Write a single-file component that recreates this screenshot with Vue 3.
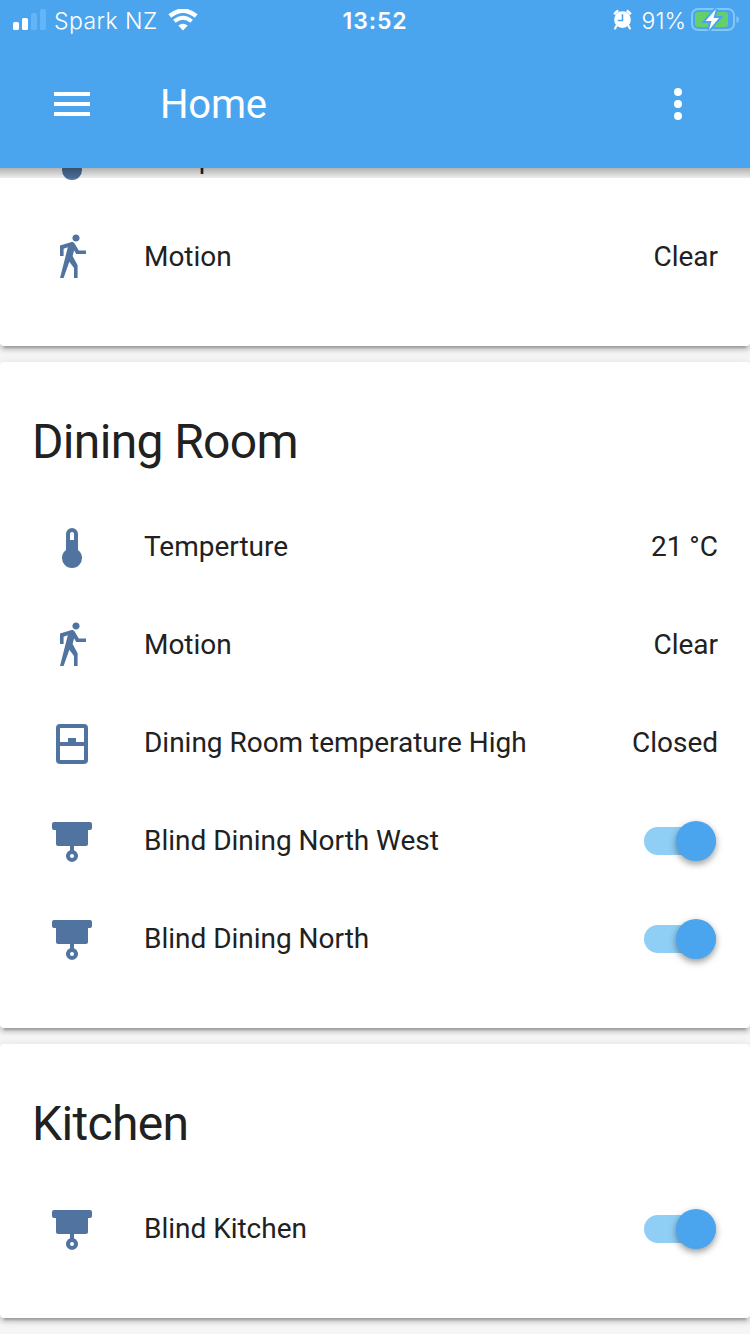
<script setup>
const icons = {
  thermometer: 'M15 13V5A3 3 0 0 0 9 5V13A5 5 0 1 0 15 13M12 4A1 1 0 0 1 13 5V8H11V5A1 1 0 0 1 12 4Z',
  walk: 'M14.12,10H19V8.2H15.38L13.38,4.87C13.08,4.37 12.54,4.03 11.92,4.03C11.74,4.03 11.58,4.06 11.42,4.11L6,5.8V11H7.8V7.33L9.91,6.67L6,22H7.8L10.67,13.89L13,17V22H14.8V15.59L12.31,11.05L13.04,8.18M14,3.8C15,3.8 15.8,3 15.8,2C15.8,1 15,0.2 14,0.2C13,0.2 12.2,1 12.2,2C12.2,3 13,3.8 14,3.8Z',
  window: 'M6,11H10V9H14V11H18V4H6V11M18,13H6V20H18V13M6,2H18A2,2 0 0,1 20,4V20A2,2 0 0,1 18,22H6A2,2 0 0,1 4,20V4A2,2 0 0,1 6,2Z',
  blind: 'M3 2H21A1 1 0 0 1 22 3V5A1 1 0 0 1 21 6H20V13A1 1 0 0 1 19 14H13V16.17A3 3 0 1 1 11 16.17V14H5A1 1 0 0 1 4 13V6H3A1 1 0 0 1 2 5V3A1 1 0 0 1 3 2M12 18A1 1 0 1 0 12 20A1 1 0 1 0 12 18Z'
}

const cards = [
  {
    rows: [
      { icon: 'thermometer', name: 'Temperature', value: '20 °C' },
      { icon: 'walk', name: 'Motion', value: 'Clear' }
    ]
  },
  {
    title: 'Dining Room',
    rows: [
      { icon: 'thermometer', name: 'Temperture', value: '21 °C' },
      { icon: 'walk', name: 'Motion', value: 'Clear' },
      { icon: 'window', name: 'Dining Room temperature High', value: 'Closed' },
      { icon: 'blind', name: 'Blind Dining North West' },
      { icon: 'blind', name: 'Blind Dining North' }
    ]
  },
  { title: 'Kitchen', rows: [{ icon: 'blind', name: 'Blind Kitchen' }] }
]
</script>

<template>
  <div class="screen">
    <header class="top">
      <div class="status">
        <div class="carrier">
          <svg class="signal" width="34" height="22" viewBox="0 0 34 22">
            <rect x="0" y="13" width="6" height="8" rx="1.6" fill="#fff" />
            <rect x="9" y="9" width="6" height="12" rx="1.6" fill="#fff" />
            <rect x="18" y="4" width="6" height="17" rx="1.6" fill="#62b5f7" />
            <rect x="27" y="0" width="6" height="21" rx="1.6" fill="#62b5f7" />
          </svg>
          <span class="network">Spark NZ</span>
          <svg class="wifi" width="30" height="22" viewBox="0 0 30 22">
            <path d="M1.8 7Q15 -3.6 28.2 7" fill="none" stroke="#fff" stroke-width="4.4" />
            <path d="M6.4 12.2Q15 5.4 23.6 12.2" fill="none" stroke="#fff" stroke-width="4" />
            <path d="M10.3 16.6Q15 12.8 19.7 16.6L15 21.6Z" fill="#fff" />
          </svg>
        </div>
        <span class="clock">13:52</span>
        <div class="power">
          <svg class="alarm" width="19" height="21" viewBox="0 0 20 22">
            <path d="M1.4 5.6A10 10 0 0 1 5.6 1.6M18.6 5.6A10 10 0 0 0 14.4 1.6" fill="none" stroke="#fff" stroke-width="2.6" />
            <path d="M4 17L2.2 20.5M16 17L17.8 20.5" stroke="#fff" stroke-width="2.2" stroke-linecap="round" />
            <circle cx="10" cy="11.2" r="8.8" fill="#fff" />
            <path d="M10 5.5V12H5" fill="none" stroke="#4ba5ee" stroke-width="1.6" />
          </svg>
          <span class="percent">91%</span>
          <svg class="battery" width="49" height="26" viewBox="0 0 49 26">
            <rect x="1" y="2" width="42" height="21" rx="6" fill="none" stroke="#83c7fa" stroke-width="2" />
            <path d="M45.5 9Q48 10 48 12.5Q48 15 45.5 16Z" fill="#83c7fa" />
            <rect x="4" y="5" width="33" height="15" rx="3" fill="#65cf69" />
            <path d="M25 2L14.5 14H20.5L18 23L28 11H22.5Z" fill="#fff" stroke="#4ba5ee" stroke-width="4" paint-order="stroke" />
          </svg>
        </div>
      </div>
      <div class="toolbar">
        <svg class="menu" width="48" height="48" viewBox="0 0 24 24">
          <path d="M3 6H21V8H3ZM3 11H21V13H3ZM3 16H21V18H3Z" fill="#fff" />
        </svg>
        <h1>Home</h1>
        <svg width="48" height="48" viewBox="0 0 24 24" fill="#fff">
          <circle cx="12" cy="6" r="2" />
          <circle cx="12" cy="12" r="2" />
          <circle cx="12" cy="18" r="2" />
        </svg>
      </div>
      <div class="shade"></div>
    </header>

    <main>
      <section v-for="(card, i) in cards" :key="i" class="card" :class="{ scrolled: !card.title }">
        <h2 v-if="card.title">{{ card.title }}</h2>
        <div v-for="row in card.rows" :key="row.name" class="row">
          <svg class="icon" width="48" height="48" viewBox="0 0 24 24">
            <path :d="icons[row.icon]" fill="#50749f" fill-rule="evenodd" />
          </svg>
          <span class="name">{{ row.name }}</span>
          <span v-if="row.value" class="value">{{ row.value }}</span>
          <span v-else class="toggle"><span class="knob"></span></span>
        </div>
      </section>
    </main>
  </div>
</template>

<style>
body {
  margin: 0;
}
</style>

<style scoped>
.screen {
  width: 750px;
  height: 1334px;
  overflow: hidden;
  background: #f5f5f5;
  color: #212121;
  font-family: Roboto, sans-serif;
  display: flex;
  flex-direction: column;
}
.top {
  position: relative;
  z-index: 2;
  flex: none;
  height: 168px;
  background: #4ba5ee;
  color: #fff;
}
.shade {
  position: absolute;
  top: 168px;
  left: 0;
  width: 100%;
  height: 10px;
  background: linear-gradient(rgba(0, 0, 0, 0.3), rgba(0, 0, 0, 0.07));
}
.status {
  display: grid;
  grid-template-columns: 1fr auto 1fr;
  height: 40px;
  padding: 0 10px 0 13px;
  align-items: center;
  font-family: Inter, sans-serif;
  font-size: 23px;
}
.carrier,
.power {
  display: flex;
  align-items: center;
}
.power {
  justify-content: flex-end;
}
.network,
.clock,
.percent {
  padding-top: 2px;
}
.network {
  margin-left: 7px;
  font-weight: 350;
  letter-spacing: 0.45px;
}
.wifi {
  margin-left: 10px;
}
.clock {
  margin-right: 3px;
  font-weight: 600;
  letter-spacing: 0.9px;
}
.alarm {
  margin-bottom: 2px;
}
.percent {
  margin: 0 5px 0 10px;
  font-weight: 350;
}
.toolbar {
  display: flex;
  align-items: center;
  height: 128px;
  padding: 0 48px;
}
h1 {
  flex: 1;
  margin: 0 0 0 64px;
  padding-top: 2px;
  font-size: 40px;
  line-height: 48px;
  font-weight: 400;
  letter-spacing: -0.2px;
}
main {
  flex: 1;
  min-height: 0;
}
.card {
  margin-bottom: 16px;
  padding-bottom: 40px;
  border-radius: 4px;
  background: #fff;
  box-shadow: 0 4px 4px rgba(0, 0, 0, 0.14), 0 2px 10px rgba(0, 0, 0, 0.12), 0 6px 2px -4px rgba(0, 0, 0, 0.2);
}
.scrolled {
  margin-top: -58px;
}
h2 {
  box-sizing: border-box;
  height: 136px;
  margin: 0;
  padding: 48px 32px 0;
  font-size: 48px;
  line-height: 64px;
  font-weight: 400;
  letter-spacing: -0.65px;
}
.row {
  display: flex;
  align-items: center;
  height: 98px;
  padding: 0 32px 0 48px;
  font-size: 28px;
  letter-spacing: -0.02px;
}
.icon {
  flex: none;
  margin: 2px 48px 0 0;
}
.name {
  flex: 1;
}
.name,
.value {
  padding-bottom: 2px;
}
.toggle {
  width: 72px;
  height: 28px;
  margin-right: 2px;
  border-radius: 14px;
  background: #8fcff5;
  display: flex;
  align-items: center;
  justify-content: flex-end;
}
.knob {
  width: 40px;
  height: 40px;
  border-radius: 50%;
  background: #4ba5ee;
  box-shadow: 0 3px 7px rgba(0, 0, 0, 0.4);
}
</style>
